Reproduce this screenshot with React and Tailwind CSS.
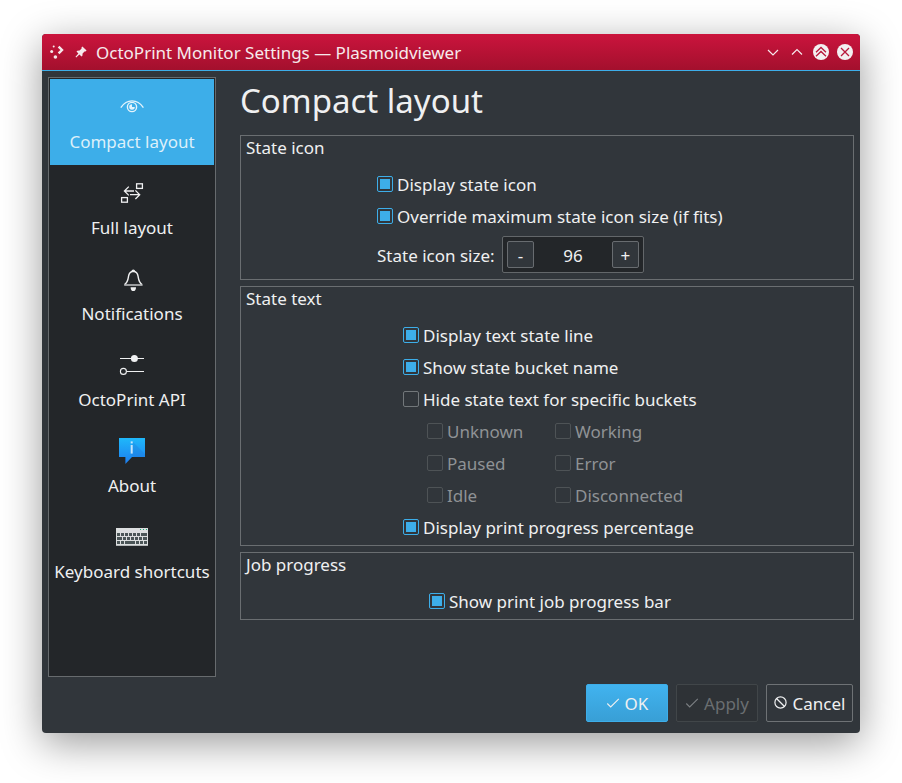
import React from "react";

function Check({ checked, disabled, children }) {
  return (
    <label className={"flex h-8 items-center gap-1 " + (disabled ? "text-[#8f9295]" : "text-[#eff0f1]")}>
      <span
        className={
          "-mt-0.5 flex h-4 w-4 shrink-0 items-center justify-center rounded-[2px] border " +
          (checked ? "border-[#3daee9]" : disabled ? "border-[#4e5356]" : "border-[#72777a]")
        }
      >
        {checked && <span className="h-2.5 w-2.5 bg-[#3daee9]" />}
      </span>
      <span className="leading-6 whitespace-nowrap">{children}</span>
    </label>
  );
}

function Group({ title, className, children }) {
  return (
    <section className={"border border-[#6a6e71] " + className}>
      <h2 className="h-6 pl-[5px] leading-6">{title}</h2>
      {children}
    </section>
  );
}

function EyeIcon() {
  return (
    <svg width="32" height="32" viewBox="0 0 32 32" fill="none" stroke="#e4f3fb" strokeWidth="1.4">
      <path d="M4.8 17.6C8 13 11.5 10.9 16 10.9S24.2 13 27.4 17.6" />
      <circle cx="16" cy="17" r="4.6" />
      <path d="M16 14.2A2.8 2.8 0 1 0 18.8 17H16Z" fill="#e4f3fb" stroke="none" />
    </svg>
  );
}

function LayoutIcon() {
  return (
    <svg width="32" height="32" viewBox="0 0 32 32" fill="none" stroke="#eff0f1" strokeWidth="1.3">
      <rect x="20.6" y="7.8" width="5.8" height="4.6" />
      <rect x="5.6" y="21.6" width="5.8" height="4.6" />
      <path d="M18 15H8.8M12.8 10.6 8.4 15l4.4 4.4M14 18.7h9.2M19.4 14.4l4.3 4.3-4.3 4.3" />
    </svg>
  );
}

function BellIcon() {
  return (
    <svg width="32" height="32" viewBox="0 0 32 32" fill="none" stroke="#eff0f1" strokeWidth="1.4">
      <path d="M8.6 22.6c3.4-2.4 3.4-5.2 3.9-8.3.4-3 2.3-4.8 4.8-5.1 2.5.3 4.4 2.1 4.8 5.1.5 3.1.5 5.9 3.9 8.3" />
      <path d="M8.2 23h18.4" stroke="#b9bbbd" strokeWidth="1.6" />
      <path d="M16.2 9.2a1.1 1.1 0 0 1 2.2 0" />
      <path d="M14.6 25.2h5.4c0 2.5-1.2 3.9-2.7 3.9s-2.7-1.4-2.7-3.9Z" fill="#eff0f1" stroke="none" />
    </svg>
  );
}

function SlidersIcon() {
  return (
    <svg width="32" height="32" viewBox="0 0 32 32" fill="none" stroke="#eff0f1" strokeWidth="1.1">
      <path d="M4 10.5h24M10.4 23.5H28" />
      <circle cx="18.4" cy="10.5" r="3.5" fill="#eff0f1" stroke="none" />
      <circle cx="7.4" cy="23.4" r="3" />
    </svg>
  );
}

function AboutIcon() {
  return (
    <svg width="32" height="32" viewBox="0 0 32 32">
      <defs>
        <linearGradient id="about" x1="0" y1="0" x2="0" y2="1">
          <stop offset="0" stopColor="#1fb8fa" />
          <stop offset="1" stopColor="#1d7df0" />
        </linearGradient>
      </defs>
      <path d="M3 4h26v19H16l-6.6 7V23H3Z" fill="url(#about)" />
      <path d="M17 8l12 12v3H18l-3-3Z" fill="#1a6fd0" opacity=".25" />
      <rect x="14.7" y="7.4" width="2" height="2" fill="#c5e4fb" />
      <rect x="14.7" y="11" width="2" height="8.6" fill="#c5e4fb" />
    </svg>
  );
}

function KeyboardIcon() {
  const rows = [
    [[1, 3], [5, 3], [9, 3], [13, 3], [17, 3], [21, 3], [25, 6]],
    [[1, 5], [7, 3], [11, 3], [15, 3], [19, 3], [23, 3], [27, 4]],
    [[1, 3], [5, 3], [9, 10], [20, 3], [24, 3], [28, 3]],
  ];
  return (
    <svg width="32" height="32" viewBox="0 0 32 32">
      <rect y="8" width="32" height="18" fill="#dcdedf" />
      <rect y="25" width="32" height="1" fill="#b5b8b9" />
      {rows.map((row, r) =>
        row.map(([x, w]) => <rect key={r + "-" + x} x={x} y={13 + r * 4} width={w} height="3" fill="#4b5557" />)
      )}
      {[24, 27, 30].map((x) => (
        <rect key={x} x={x} y="9" width="1" height="1" fill="#1fa67a" />
      ))}
    </svg>
  );
}

const pages = [
  ["Compact layout", EyeIcon],
  ["Full layout", LayoutIcon],
  ["Notifications", BellIcon],
  ["OctoPrint API", SlidersIcon],
  ["About", AboutIcon],
  ["Keyboard shortcuts", KeyboardIcon],
];

function TitleBar() {
  return (
    <header className="flex h-[37px] items-center rounded-t-[4px] border-b border-[#3daee9] bg-linear-to-b from-[#cb143d] to-[#a3102d] pr-[7px] pl-2 text-[#f6e9ec]">
      <svg width="14" height="14" viewBox="0 0 14 14" className="shrink-0" fill="#f6e9ec">
        <path d="M8.6 1.6 12 5 8.6 8.4" fill="none" stroke="#f6e9ec" strokeWidth="2.4" />
        <circle cx="3.7" cy="1.5" r="1" />
        <circle cx="1.7" cy="6.6" r="1.5" />
        <circle cx="5.4" cy="12" r="1.8" />
      </svg>
      <svg width="12" height="12" viewBox="0 0 12 12" className="ml-[11px] shrink-0" fill="#f6e9ec">
        <path d="M7.4.6 11.6 4.6 10.4 5.6 9.5 5.4 7.6 7.5 7.4 9.8 6.5 10.6 4.4 8.5 1.2 11.4.5 10.8 3.4 7.5 1.5 5.6 2.3 4.7 4.6 4.6 6.6 2.6 6.5 1.5Z" />
      </svg>
      <h1 className="ml-[9px] flex-1 pt-0.5 whitespace-nowrap">OctoPrint Monitor Settings — Plasmoidviewer</h1>
      <svg width="88" height="18" viewBox="0 0 88 18" fill="none" stroke="#f6e9ec" strokeWidth="1.2" className="shrink-0">
        <path d="M3 7 8 12l5-5M27 11.5l5-5 5 5" />
        <circle cx="56" cy="9" r="8" fill="#f3f0f1" stroke="none" />
        <circle cx="80" cy="9" r="8" fill="#f3f0f1" stroke="none" />
        <path d="M51 9.2 56 4.5l5 4.7M51 13.2 56 8.5l5 4.7M76 5l8 8M84 5l-8 8" stroke="#b8183c" strokeWidth="1.3" />
      </svg>
    </header>
  );
}

function Tick({ color }) {
  return (
    <svg width="14" height="12" viewBox="0 0 14 12" fill="none" stroke={color} strokeWidth="1.1">
      <path d="M1.3 6.5 4.7 9.9 12.8 1.8" />
    </svg>
  );
}

export default function App() {
  return (
    <div className="h-[783px] w-[902px] overflow-hidden bg-white px-[42px] pt-[34px] font-['Noto_Sans',sans-serif] text-[17px] text-[#eff0f1]">
      <div className="flex h-[699px] flex-col rounded-[4px] bg-[#31363b] shadow-[0_10px_40px_rgba(0,0,0,0.4)]">
        <TitleBar />
        <div className="flex pt-1.5 pr-1.5 pl-1.5">
          <nav className="h-[600px] w-[168px] shrink-0 border border-[#676b6e] bg-[#232629] p-px">
            {pages.map(([name, Icon], i) => (
              <div
                key={name}
                className={"flex h-[86px] flex-col items-center pt-[11px] " + (i === 0 ? "bg-[#3daee9] text-[#dcf0fa]" : "")}
              >
                <Icon />
                <span className="mt-2 leading-6 whitespace-nowrap">{name}</span>
              </div>
            ))}
          </nav>
          <main className="ml-6 flex-1">
            <h1 className="h-[58px] text-[33px] leading-[48px] whitespace-nowrap">Compact layout</h1>
            <Group title="State icon" className="h-[145px]">
              <div className="mt-[9px] pl-[136px]">
                <Check checked>Display state icon</Check>
                <Check checked>Override maximum state icon size (if fits)</Check>
                <div className="mt-[3px] flex items-center">
                  <span className="w-[125px] pt-0.5 whitespace-nowrap">State icon size:</span>
                  <div className="flex h-[37px] w-[142px] items-center justify-between rounded-[2px] border border-[#63676a] bg-[#232629] px-1">
                    <button className="h-[27px] w-[27px] rounded-[2px] border border-[#686c70] bg-[#31363b] leading-[27px]">-</button>
                    <span className="pt-0.5">96</span>
                    <button className="h-[27px] w-[27px] rounded-[2px] border border-[#686c70] bg-[#31363b] leading-[27px]">+</button>
                  </div>
                </div>
              </div>
            </Group>
            <Group title="State text" className="mt-1.5 h-[260px]">
              <div className="mt-[9px] pl-[162px]">
                <Check checked>Display text state line</Check>
                <Check checked>Show state bucket name</Check>
                <Check>Hide state text for specific buckets</Check>
                <div className="grid grid-cols-[128px_128px] pl-6">
                  <Check disabled>Unknown</Check>
                  <Check disabled>Working</Check>
                  <Check disabled>Paused</Check>
                  <Check disabled>Error</Check>
                  <Check disabled>Idle</Check>
                  <Check disabled>Disconnected</Check>
                </div>
                <Check checked>Display print progress percentage</Check>
              </div>
            </Group>
            <Group title="Job progress" className="mt-1.5 h-[68px]">
              <div className="mt-[9px] pl-[188px]">
                <Check checked>Show print job progress bar</Check>
              </div>
            </Group>
          </main>
        </div>
        <footer className="mt-[7px] flex justify-end gap-2 pr-[7px]">
          <button className="flex h-[38px] w-[82px] items-center justify-center gap-[5px] rounded-[2px] border border-[#3daee9] bg-linear-to-b from-[#41b3ef] to-[#389fd6]">
            <Tick color="#eff0f1" />
            <span className="pt-0.5">OK</span>
          </button>
          <button className="flex h-[38px] w-[82px] items-center justify-center gap-[5px] rounded-[2px] border border-[#414649] bg-[#2e3236] text-[#6a6e71]">
            <Tick color="#7b7f82" />
            <span className="pt-0.5">Apply</span>
          </button>
          <button className="flex h-[38px] w-[87px] items-center justify-center gap-[5px] rounded-[2px] border border-[#6e7275]">
            <svg width="14" height="14" viewBox="0 0 14 14" fill="none" stroke="#eff0f1" strokeWidth="1.2" className="shrink-0">
              <circle cx="6.5" cy="6.5" r="5.6" />
              <path d="m2.5 2.5 8 8" />
            </svg>
            <span className="pt-0.5">Cancel</span>
          </button>
        </footer>
      </div>
    </div>
  );
}
